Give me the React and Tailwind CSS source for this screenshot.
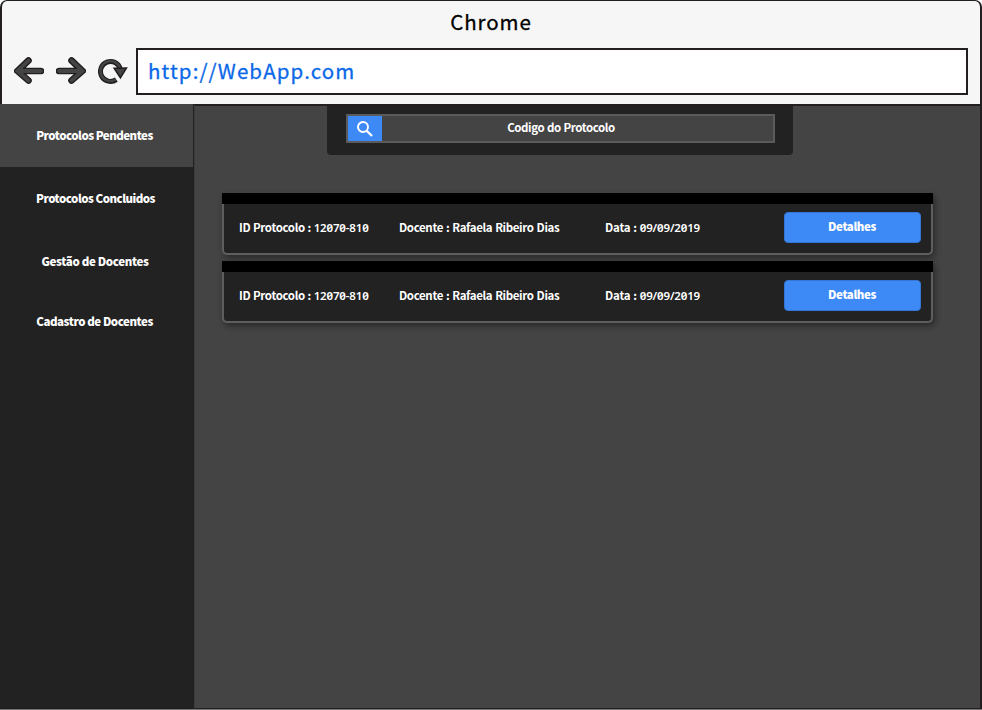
const protocols = [
  { id: '12070-810', teacher: 'Rafaela Ribeiro Dias', date: '09/09/2019' },
  { id: '12070-810', teacher: 'Rafaela Ribeiro Dias', date: '09/09/2019' },
];

function Arrow({ flip }) {
  const d = 'M18 71H41M28.5 60.5L17.5 71L28.5 80.5';
  return (
    <svg width="30" height="30" viewBox="14 56 30 30" className={flip ? '-scale-x-100' : ''} fill="none" strokeLinecap="round" strokeLinejoin="miter">
      <path d={d} stroke="#231f20" strokeWidth="6.6" />
      <path d={d} stroke="#444" strokeWidth="3.8" />
    </svg>
  );
}

function Reload() {
  return (
    <svg width="30" height="30" viewBox="97 56 30 30">
      <path d="M115.3 79.6A10 10 0 1 1 119.2 69" fill="none" stroke="#231f20" strokeWidth="5" />
      <path d="M114.8 79.5A10 10 0 1 1 119.2 69" fill="none" stroke="#444" strokeWidth="2.4" />
      <path d="M113.2 68.2L125.4 68L119.4 77.8Z" fill="#444" stroke="#231f20" strokeWidth="1.6" />
    </svg>
  );
}

function Digits({ children }) {
  return <span className="font-['Noto_Sans',sans-serif] font-semibold tracking-[-0.15px] slashed-zero">{children}</span>;
}

function ProtocolCard({ item }) {
  return (
    <article className="h-[62px] w-[711px] rounded-b-[5px] shadow-[2px_3px_6px_rgba(0,0,0,0.4)]">
      <div className="h-[11px] bg-black" />
      <div className="flex h-[51px] rounded-b-[5px] border-2 border-t-0 border-[#5e5e5e] bg-[#222] pl-[15px] text-[11.5px] font-bold leading-4 text-white">
        <span className="mt-[15px] w-[160px] whitespace-nowrap tracking-[-0.36px] [word-spacing:0.5px]">ID Protocolo : <Digits>{item.id}</Digits></span>
        <span className="mt-[15px] w-[206px] whitespace-nowrap tracking-[-0.36px] [word-spacing:0.7px]">Docente : {item.teacher}</span>
        <span className="mt-[15px] w-[179px] whitespace-nowrap tracking-[-0.2px] [word-spacing:0.5px]">Data : <Digits>{item.date}</Digits></span>
        <button className="mt-2 flex h-[31px] w-[137px] justify-center rounded-[4px] border border-[#3575d5] bg-[#3d8af7] pt-[5px] pr-[1px] font-black tracking-[-0.4px]">Detalhes</button>
      </div>
    </article>
  );
}

export default function App() {
  return (
    <div className="flex h-[710px] w-[982px] flex-col overflow-hidden bg-[#777] font-['Noto_Sans_CJK_SC','Noto_Sans',sans-serif]">
      <div className="shrink-0 bg-white">
        <header className="h-[104px] rounded-t-[7px] border-x-2 border-t border-[#231f20] bg-[#f6f6f6]">
          <h1 className="flex h-[47px] justify-center pt-[5px] text-[20.5px] font-normal leading-[30px] tracking-[0.95px] text-black [-webkit-text-stroke:0.3px_black]">Chrome</h1>
          <div className="flex h-[47px]">
            <nav className="flex w-[134px] gap-[12px] pl-[12px] pt-2">
              <Arrow />
              <Arrow flip />
              <Reload />
            </nav>
            <div className="h-[47px] w-[832px] border-2 border-[#231f20] bg-white pl-[10px] pt-[5px] text-[20.5px] font-normal leading-[30px] tracking-[1.12px] text-[#0b68e8] [-webkit-text-stroke:0.3px_#0b68e8]">http://WebApp.com</div>
          </div>
        </header>
      </div>
      <div className="flex h-[605px]">
        <aside className="flex w-[194px] flex-col border-b border-[#1d1d1d] bg-[#222] text-center text-[11.5px] font-black leading-4 tracking-[-0.5px] text-white">
          <div className="h-[63px] w-[193px] bg-[#444] pr-[4px] pt-[23px]">Protocolos Pendentes</div>
          <div className="h-[63px] pr-[3px] pt-[23px]">Protocolos Concluidos</div>
          <div className="h-[60px] pr-[4px] pt-[23px] tracking-[-0.35px]">Gestão de Docentes</div>
          <div className="pr-[5px] pt-[23px] tracking-[-0.45px]">Cadastro de Docentes</div>
        </aside>
        <main className="w-[788px] border-b border-l border-r-2 border-t-2 border-[#231f20] border-l-[#3b3b3b] bg-[#444]">
          <div className="ml-[132px] h-[49px] w-[466px] rounded-b-[4px] bg-[#222] pl-[19px] pt-[8px]">
            <div className="flex h-[29px] w-[429px] border-2 border-[#5b5b5b] bg-[#444]">
              <span className="flex w-[34px] items-center justify-center bg-[#3d8af7]">
                <svg width="18" height="18" viewBox="0 0 18 18" fill="none" stroke="white" strokeWidth="1.9">
                  <circle cx="7" cy="7" r="5" />
                  <path d="M10.7 10.7L16 16" strokeWidth="2.3" />
                </svg>
              </span>
              <span className="flex-1 pr-[33px] pt-[3px] text-center text-[11.5px] font-bold leading-4 tracking-[-0.4px] text-white [word-spacing:0.5px]">Codigo do Protocolo</span>
            </div>
          </div>
          <div className="ml-[27px] mt-[38px] flex flex-col gap-[6px]">
            {protocols.map((item, index) => <ProtocolCard key={index} item={item} />)}
          </div>
        </main>
      </div>
    </div>
  );
}
